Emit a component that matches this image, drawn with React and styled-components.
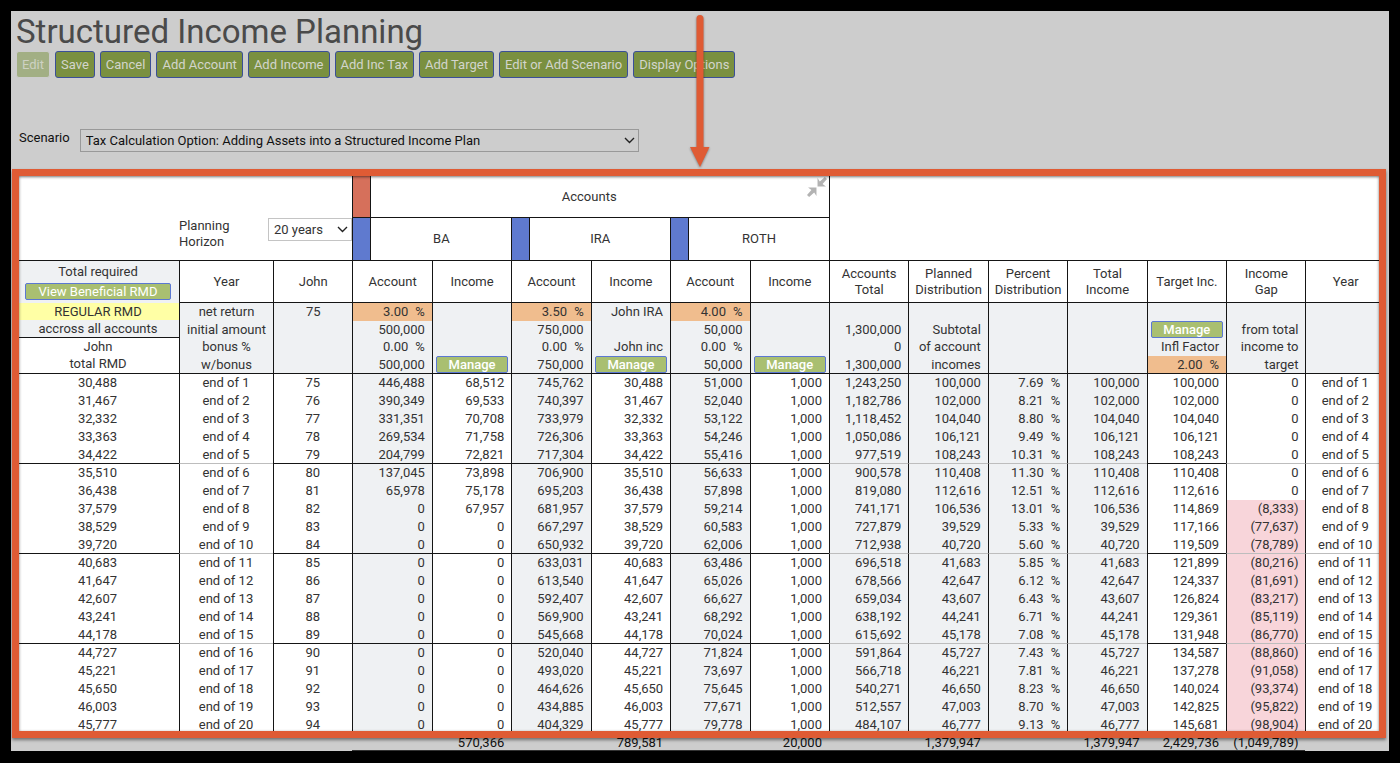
import React from 'react';
import styled, { createGlobalStyle, css } from 'styled-components';

const colors = {
  screen: '#cdcdcd',
  line: '#151515',
  softLine: '#bdbdbd',
  shade: '#eff1f3',
  peach: '#f0bd8e',
  pink: '#f8d5da',
  yellow: '#ffffa5',
  red: '#d6705b',
  blue: '#5f7acf',
  orange: '#df5b34',
  text: '#333333',
};

const GlobalStyle = createGlobalStyle`
  * {
    box-sizing: border-box;
  }

  body {
    margin: 0;
    background: #000;
    color: ${colors.text};
    font-family: Roboto, 'Liberation Sans', sans-serif;
    font-size: 13px;
  }

  button,
  select {
    font: inherit;
  }
`;

const Page = styled.div`
  position: relative;
  min-height: 100vh;
  padding: 11px 11px 12px;
  background: #000;
`;

const Screen = styled.main`
  overflow: hidden;
  background: ${colors.screen};
`;

const Title = styled.h1`
  margin: 0;
  padding: 2px 0 0 5px;
  font-size: 33px;
  font-weight: 400;
  line-height: 38px;
  color: #4a4a4a;
`;

const Toolbar = styled.div`
  display: flex;
  gap: 5px;
  padding-left: 5px;
`;

const ToolButton = styled.button`
  height: 27px;
  padding: 0 5px;
  border: 1px solid #3a4f98;
  border-radius: 3px;
  background: #7a9040;
  color: #d3d5cc;
  cursor: pointer;

  &:disabled {
    border-color: ${colors.screen};
    background: #a2af84;
    color: #ced2c3;
    cursor: default;
  }
`;

const ScenarioBar = styled.div`
  display: flex;
  gap: 10px;
  margin: 51px 0 24px;
  padding-left: 8px;
  color: #111;
`;

const ScenarioLabel = styled.label`
  line-height: 18px;
`;

const SelectBox = styled.div`
  position: relative;
  height: 23px;
  width: ${({ $width }) => $width || 'auto'};
  flex: ${({ $grow }) => ($grow ? 1 : 'none')};

  & > select {
    appearance: none;
    width: 100%;
    height: 100%;
    padding: 0 24px 0 5px;
    border: 1px solid ${({ $border }) => $border};
    border-radius: 0;
    background: transparent;
    color: inherit;
  }

  & > svg {
    position: absolute;
    top: 8px;
    right: 4px;
    pointer-events: none;
  }
`;

const TableArea = styled.section`
  position: relative;
  margin: 0 4px 0 6px;
`;

const Highlight = styled.div`
  position: absolute;
  top: -7px;
  right: -1px;
  bottom: 13px;
  left: -5px;
  border: 7px solid ${colors.orange};
  box-shadow: 0 2px 3px rgba(0, 0, 0, 0.45),
    inset 0 1px 3px rgba(0, 0, 0, 0.55);
  pointer-events: none;
`;

const Arrow = styled.svg`
  position: absolute;
  top: 12px;
  left: 50%;
  margin-left: -12px;
  filter: drop-shadow(0 1px 1px rgba(0, 0, 0, 0.4));
  pointer-events: none;
`;

const Table = styled.table`
  width: 100%;
  table-layout: fixed;
  border-collapse: separate;
  border-spacing: 0;
  line-height: 17px;
`;

const Col = styled.col`
  width: ${({ $width }) => $width};
`;

const HeadCell = styled.th`
  height: ${({ $height }) => $height};
  padding: 0;
  border-bottom: 1px solid ${colors.line};
  border-left: ${({ $first }) => ($first ? 0 : '1px')} solid ${colors.line};
  background: #fff;
  font-weight: 400;
  line-height: 16px;
  white-space: pre-line;
`;

const HorizonCell = styled(HeadCell)`
  vertical-align: bottom;
`;

const RmdCell = styled(HeadCell)`
  vertical-align: top;
  line-height: 17px;
`;

const Horizon = styled.div`
  display: flex;
  align-items: flex-start;
  padding: 0 0 10px 162px;
  text-align: left;
`;

const HorizonLabel = styled.label`
  width: 89px;
  line-height: 16px;
`;

const Group = styled.div`
  display: flex;
  align-items: center;
  height: ${({ $height }) => $height};
`;

const Swatch = styled.span`
  width: 18px;
  height: 100%;
  border-right: 1px solid ${colors.line};
  background: ${({ $color }) => $color};
`;

const GroupName = styled.span`
  flex: 1;
`;

const CollapseButton = styled.button`
  align-self: flex-start;
  width: 22px;
  padding: 1px 2px 0 0;
  border: 0;
  background: none;
  line-height: 0;
  cursor: pointer;
`;

const RmdShaded = styled.div`
  border-bottom: 1px solid ${colors.line};
  background: ${colors.shade};
`;

const RmdTitle = styled.div`
  line-height: 22px;
`;

const RmdType = styled.div`
  background: ${colors.yellow};
`;

const SmallButton = styled.button`
  display: block;
  width: calc(100% - ${({ $inset }) => $inset * 2}px);
  height: 17px;
  margin: 0 auto;
  padding: 0;
  border: 1px solid #5b78d2;
  border-radius: 2px;
  background: #a9bf71;
  color: #fff;
  font-weight: ${({ $strong }) => ($strong ? 500 : 400)};
  line-height: 15px;
  text-align: center;
  cursor: pointer;
`;

const ButtonGap = styled.div`
  padding-bottom: 3px;
`;

const StackCell = styled.td`
  padding: 0;
  border-bottom: 1px solid ${colors.line};
  border-left: 1px solid ${colors.line};
  background: ${colors.shade};
`;

const Stack = styled.div`
  display: grid;
  grid-template-rows: repeat(4, minmax(0, 1fr));
  height: 70px;
  text-align: ${({ $align }) => $align || 'right'};
`;

const StackLine = styled.div`
  padding-right: ${({ $flush }) => ($flush ? 0 : '7px')};
  background: ${({ $input }) => ($input ? colors.peach : 'transparent')};
  white-space: nowrap;
`;

const Percent = styled.span`
  margin-left: 7px;
`;

const DataCell = styled.td`
  height: ${({ $last }) => ($last ? '17px' : '18px')};
  padding: 0 ${({ $align }) => ($align === 'center' ? '1px' : '7px')} 0 0;
  border-left: ${({ $first }) => ($first ? 0 : '1px')} solid ${colors.line};
  background: ${({ $shade }) => ($shade ? colors.shade : '#fff')};
  text-align: ${({ $align }) => $align || 'right'};
  vertical-align: top;
  white-space: nowrap;

  ${({ $negative }) =>
    $negative &&
    css`
      background: ${colors.pink};
    `}

  ${({ $rule }) =>
    $rule &&
    css`
      border-bottom: 1px solid ${$rule};
    `}
`;

const TotalCell = styled.td`
  height: 18px;
  padding: 2px 7px 0 0;
  border-bottom: 1px solid ${({ $ruled }) => ($ruled ? '#333' : 'transparent')};
  color: #111;
  line-height: 15px;
  text-align: right;
`;

const columns = [
  { key: 'rmd', align: 'center', first: true },
  { key: 'year', align: 'center', soft: true },
  { key: 'age', align: 'center' },
  { key: 'baAccount', shade: true },
  { key: 'baIncome' },
  { key: 'iraAccount', shade: true },
  { key: 'iraIncome' },
  { key: 'rothAccount', shade: true },
  { key: 'rothIncome' },
  { key: 'total', shade: true, soft: true },
  { key: 'planned', shade: true, soft: true },
  { key: 'percent', shade: true, soft: true },
  { key: 'income', shade: true, soft: true },
  { key: 'target' },
  { key: 'gap', soft: true },
  { key: 'yearEnd', align: 'center', soft: true },
];

// rmd, BA account, BA income, IRA account, ROTH account, total, planned, percent, target, gap
const plan = [
  ['30,488', '446,488', '68,512', '745,762', '51,000', '1,243,250', '100,000', '7.69', '100,000', '0'],
  ['31,467', '390,349', '69,533', '740,397', '52,040', '1,182,786', '102,000', '8.21', '102,000', '0'],
  ['32,332', '331,351', '70,708', '733,979', '53,122', '1,118,452', '104,040', '8.80', '104,040', '0'],
  ['33,363', '269,534', '71,758', '726,306', '54,246', '1,050,086', '106,121', '9.49', '106,121', '0'],
  ['34,422', '204,799', '72,821', '717,304', '55,416', '977,519', '108,243', '10.31', '108,243', '0'],
  ['35,510', '137,045', '73,898', '706,900', '56,633', '900,578', '110,408', '11.30', '110,408', '0'],
  ['36,438', '65,978', '75,178', '695,203', '57,898', '819,080', '112,616', '12.51', '112,616', '0'],
  ['37,579', '0', '67,957', '681,957', '59,214', '741,171', '106,536', '13.01', '114,869', '(8,333)'],
  ['38,529', '0', '0', '667,297', '60,583', '727,879', '39,529', '5.33', '117,166', '(77,637)'],
  ['39,720', '0', '0', '650,932', '62,006', '712,938', '40,720', '5.60', '119,509', '(78,789)'],
  ['40,683', '0', '0', '633,031', '63,486', '696,518', '41,683', '5.85', '121,899', '(80,216)'],
  ['41,647', '0', '0', '613,540', '65,026', '678,566', '42,647', '6.12', '124,337', '(81,691)'],
  ['42,607', '0', '0', '592,407', '66,627', '659,034', '43,607', '6.43', '126,824', '(83,217)'],
  ['43,241', '0', '0', '569,900', '68,292', '638,192', '44,241', '6.71', '129,361', '(85,119)'],
  ['44,178', '0', '0', '545,668', '70,024', '615,692', '45,178', '7.08', '131,948', '(86,770)'],
  ['44,727', '0', '0', '520,040', '71,824', '591,864', '45,727', '7.43', '134,587', '(88,860)'],
  ['45,221', '0', '0', '493,020', '73,697', '566,718', '46,221', '7.81', '137,278', '(91,058)'],
  ['45,650', '0', '0', '464,626', '75,645', '540,271', '46,650', '8.23', '140,024', '(93,374)'],
  ['46,003', '0', '0', '434,885', '77,671', '512,557', '47,003', '8.70', '142,825', '(95,822)'],
  ['45,777', '0', '0', '404,329', '79,778', '484,107', '46,777', '9.13', '145,681', '(98,904)'],
];

const rows = plan.map(
  ([rmd, baAccount, baIncome, iraAccount, rothAccount, total, planned, percent, target, gap], i) => ({
    rmd,
    year: `end of ${i + 1}`,
    age: 75 + i,
    baAccount,
    baIncome,
    iraAccount,
    iraIncome: rmd,
    rothAccount,
    rothIncome: '1,000',
    total,
    planned,
    percent,
    income: planned,
    target,
    gap,
    yearEnd: `end of ${i + 1}`,
  })
);

const totals = {
  baIncome: '570,366',
  iraIncome: '789,581',
  rothIncome: '20,000',
  planned: '1,379,947',
  income: '1,379,947',
  target: '2,429,736',
  gap: '(1,049,789)',
};

const tools = [
  'Save',
  'Cancel',
  'Add Account',
  'Add Income',
  'Add Inc Tax',
  'Add Target',
  'Edit or Add Scenario',
  'Display Options',
];

const accounts = ['BA', 'IRA', 'ROTH'];

const headings = [
  'Year',
  'John',
  'Account',
  'Income',
  'Account',
  'Income',
  'Account',
  'Income',
  'Accounts\nTotal',
  'Planned\nDistribution',
  'Percent\nDistribution',
  'Total\nIncome',
  'Target Inc.',
  'Income\nGap',
  'Year',
];

const manage = { button: 'Manage' };

const setup = [
  { align: 'center', lines: ['net return', 'initial amount', 'bonus %', 'w/bonus'] },
  { align: 'center', lines: ['75', '', '', ''] },
  { lines: [{ rate: '3.00', input: true }, '500,000', { rate: '0.00' }, '500,000'] },
  { lines: ['', '', '', manage] },
  { lines: [{ rate: '3.50', input: true }, '750,000', { rate: '0.00' }, '750,000'] },
  { lines: ['John IRA', '', 'John inc', manage] },
  { lines: [{ rate: '4.00', input: true }, '50,000', { rate: '0.00' }, '50,000'] },
  { lines: ['', '', '', manage] },
  { lines: ['', '1,300,000', '0', '1,300,000'] },
  { lines: ['', 'Subtotal', 'of account', 'incomes'] },
  { lines: ['', '', '', ''] },
  { lines: ['', '', '', ''] },
  { lines: ['', manage, 'Infl Factor', { rate: '2.00', input: true }] },
  { lines: ['', 'from total', 'income to', 'target'] },
  { lines: ['', '', '', ''] },
];

const Chevron = () => (
  <svg width='11' height='7' viewBox='0 0 11 7' fill='none' aria-hidden='true'>
    <path d='M1 1L5.5 5.5L10 1' stroke='#222' strokeWidth='1.4' />
  </svg>
);

const CollapseIcon = () => (
  <svg width='20' height='20' viewBox='0 0 19 19' fill='#b3b3b3' aria-hidden='true'>
    <path d='M10 1L12.2 4.3L17 0L19 2L14.8 6.6L18 9H10Z' />
    <path d='M9 18L6.8 14.7L2 19L0 17L4.2 12.4L1 10H9Z' />
  </svg>
);

const SetupLine = ({ line, align }) => {
  if (line.button) {
    return (
      <StackLine $flush>
        <SmallButton $inset={3} $strong>
          {line.button}
        </SmallButton>
      </StackLine>
    );
  }
  if (line.rate) {
    return (
      <StackLine $input={line.input}>
        {line.rate}
        <Percent>%</Percent>
      </StackLine>
    );
  }
  return <StackLine $flush={align === 'center'}>{line}</StackLine>;
};

const TableHead = () => (
  <thead>
    <tr>
      <HorizonCell colSpan={3} rowSpan={2} $first>
        <Horizon>
          <HorizonLabel htmlFor='horizon'>
            Planning
            <br />
            Horizon
          </HorizonLabel>
          <SelectBox $grow $border='#c4c4c4'>
            <select id='horizon' defaultValue='20'>
              <option value='20'>20 years</option>
            </select>
            <Chevron />
          </SelectBox>
        </Horizon>
      </HorizonCell>
      <HeadCell colSpan={6} $height='42px'>
        <Group $height='41px'>
          <Swatch $color={colors.red} />
          <GroupName>Accounts</GroupName>
          <CollapseButton aria-label='Collapse'>
            <CollapseIcon />
          </CollapseButton>
        </Group>
      </HeadCell>
      <HeadCell colSpan={7} rowSpan={2} />
    </tr>
    <tr>
      {accounts.map((name) => (
        <HeadCell key={name} colSpan={2} $height='43px'>
          <Group $height='42px'>
            <Swatch $color={colors.blue} />
            <GroupName>{name}</GroupName>
          </Group>
        </HeadCell>
      ))}
    </tr>
    <tr>
      <RmdCell rowSpan={2} $first>
        <RmdShaded>
          <RmdTitle>Total required</RmdTitle>
          <ButtonGap>
            <SmallButton $inset={8}>View Beneficial RMD</SmallButton>
          </ButtonGap>
          <RmdType>REGULAR RMD</RmdType>
          <div>accross all accounts</div>
        </RmdShaded>
        <div>John</div>
        <div>total RMD</div>
      </RmdCell>
      {headings.map((heading, i) => (
        <HeadCell key={i} $height='42px'>
          {heading}
        </HeadCell>
      ))}
    </tr>
    <tr>
      {setup.map(({ align, lines }, i) => (
        <StackCell key={i}>
          <Stack $align={align}>
            {lines.map((line, n) => (
              <SetupLine key={n} line={line} align={align} />
            ))}
          </Stack>
        </StackCell>
      ))}
    </tr>
  </thead>
);

const PlanRow = ({ row, ruled, last }) => (
  <tr>
    {columns.map(({ key, align, shade, soft, first }) => (
      <DataCell
        key={key}
        $align={align}
        $shade={shade}
        $first={first}
        $last={last}
        $negative={key === 'gap' && row.gap !== '0'}
        $rule={ruled && (soft ? colors.softLine : colors.line)}
      >
        {row[key]}
        {key === 'percent' && <Percent>%</Percent>}
      </DataCell>
    ))}
  </tr>
);

const App = () => (
  <Page>
    <GlobalStyle />
    <Screen>
      <Title>Structured Income Planning</Title>
      <Toolbar>
        <ToolButton disabled>Edit</ToolButton>
        {tools.map((tool) => (
          <ToolButton key={tool}>{tool}</ToolButton>
        ))}
      </Toolbar>
      <ScenarioBar>
        <ScenarioLabel htmlFor='scenario'>Scenario</ScenarioLabel>
        <SelectBox $width='559px' $border='#999'>
          <select id='scenario' defaultValue='tax'>
            <option value='tax'>
              Tax Calculation Option: Adding Assets into a Structured Income Plan
            </option>
          </select>
          <Chevron />
        </SelectBox>
      </ScenarioBar>
      <TableArea>
        <Table>
          <colgroup>
            {columns.map(({ key }, i) => (
              <Col key={key} $width={['162px', '94px'][i] || 'auto'} />
            ))}
          </colgroup>
          <TableHead />
          <tbody>
            {rows.map((row, i) => (
              <PlanRow
                key={row.year}
                row={row}
                ruled={i % 5 === 4 && i < rows.length - 1}
                last={i === rows.length - 1}
              />
            ))}
          </tbody>
          <tfoot>
            <tr>
              {columns.map(({ key }, i) => (
                <TotalCell key={key} $ruled={i > 2 && i < 15}>
                  {totals[key]}
                </TotalCell>
              ))}
            </tr>
          </tfoot>
        </Table>
        <Highlight />
      </TableArea>
    </Screen>
    <Arrow width='24' height='160' viewBox='0 0 24 160' fill={colors.orange} aria-hidden='true'>
      <path d='M8.5 6.5a3.5 3.5 0 0 1 7 0V135H21.5L12 155L2 135H8.5Z' />
    </Arrow>
  </Page>
);

export default App;
